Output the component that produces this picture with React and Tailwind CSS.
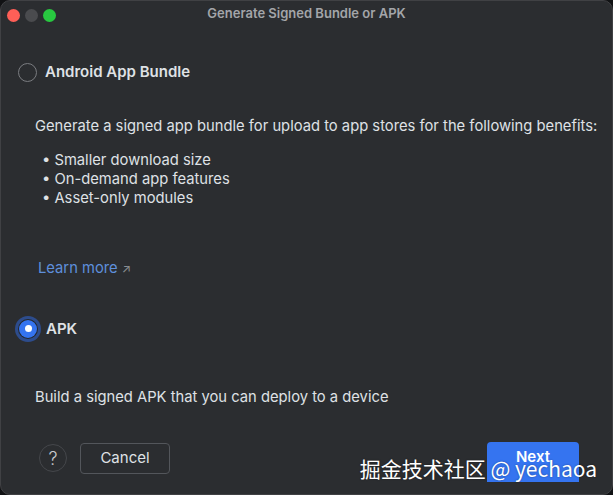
import React from "react";

const font = { fontFamily: '"Inter", "Noto Sans", "Liberation Sans", sans-serif' };

function Radio({ checked }) {
  if (checked) {
    return (
      <span className="ml-[1px] flex h-[18px] w-[18px] items-center justify-center rounded-full bg-[#3574f0] ring-[3px] ring-[#2d4c8c] ring-offset-1 ring-offset-[#25272a]">
        <span className="h-[7px] w-[7px] rounded-full bg-white" />
      </span>
    );
  }
  return <span className="h-[19px] w-[19px] rounded-full border-[1.5px] border-[#7a7c80]" />;
}

export default function App() {
  return (
    <div className="h-[495px] w-[613px] bg-[#111214]" style={font}>
      <div className="flex h-full w-full flex-col overflow-hidden rounded-[10px] border border-[#404144] bg-[#2b2d30] text-[#dfe1e5]">
        {/* title bar */}
        <div className="relative flex h-[27px] shrink-0 items-center pl-[6px] pt-[1px]">
          <div className="flex gap-[5px]">
            <span className="h-[13px] w-[13px] rounded-full bg-[#fe5f57]" />
            <span className="h-[13px] w-[13px] rounded-full bg-[#4a4b4e]" />
            <span className="h-[13px] w-[13px] rounded-full bg-[#28c840]" />
          </div>
          <div className="absolute inset-x-0 top-0 flex h-[26px] items-center justify-center text-[13px] font-semibold text-[#a3a5a9]">
            Generate Signed Bundle or APK
          </div>
        </div>

        {/* body */}
        <div className="flex flex-1 flex-col pl-[17px] text-[14.75px]">
          <div className="mt-[33px] flex items-center gap-[8px]">
            <Radio />
            <span className="text-[15px] font-semibold text-[#dfe1e5]">Android App Bundle</span>
          </div>

          <div className="ml-[17px] mt-[33px] leading-[19px]">
            <p>Generate a signed app bundle for upload to app stores for the following benefits:</p>
            <ul className="mt-[15px] pl-[7px]">
              <li>• Smaller download size</li>
              <li>• On-demand app features</li>
              <li>• Asset-only modules</li>
            </ul>
          </div>

          <div className="ml-[20px] mt-[51px] flex items-center gap-[4px] leading-[19px]">
            <span className="text-[#5e8fdc]">Learn more</span>
            <span className="text-[12px] text-[#8c8f94]">↗</span>
          </div>

          <div className="mt-[40px] flex items-center gap-[9px]">
            <Radio checked />
            <span className="text-[15px] font-semibold text-[#dfe1e5]">APK</span>
          </div>

          <p className="ml-[17px] mt-[48px] leading-[19px]">
            Build a signed APK that you can deploy to a device
          </p>
        </div>

        {/* footer */}
        <div className="relative flex h-[50px] shrink-0 items-start px-[38px]">
          <span className="flex h-[28px] w-[28px] items-center justify-center rounded-full border border-[#45474b] text-[18px] font-light text-[#c8cace]">
            ?
          </span>
          <button className="ml-[13px] mt-[-1px] h-[31px] w-[90px] rounded-[4px] border border-[#53565b] bg-[#2b2d30] text-[15px] text-[#dfe1e5]">
            Cancel
          </button>
          <button className="ml-auto mr-[-5px] mt-[-2px] h-[40px] w-[92px] rounded-t-[4px] bg-[#3574f0] pb-[10px] text-[15px] font-semibold text-white">
            Next
          </button>
          <div
            className="absolute right-[15px] top-[12px] text-[21px] leading-[24px] text-white"
            style={{ fontFamily: '"Noto Sans CJK SC", "Noto Sans", sans-serif', textShadow: "0 0 2px rgba(0,0,0,0.4)" }}
          >
            掘金技术社区 @ yechaoa
          </div>
        </div>
      </div>
    </div>
  );
}
